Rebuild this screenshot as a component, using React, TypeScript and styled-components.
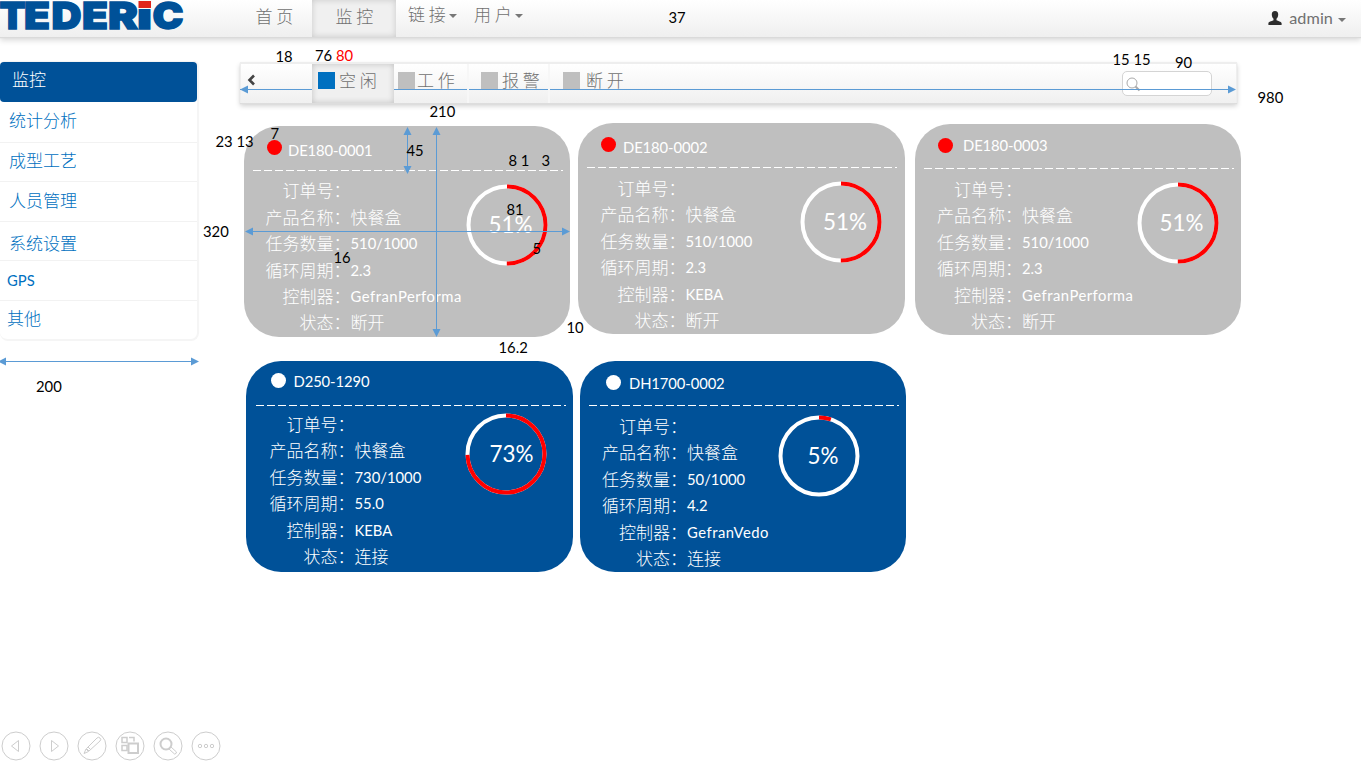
import React from 'react';
import styled, { createGlobalStyle, css } from 'styled-components';

const GlobalStyle = createGlobalStyle`
  *, *::before, *::after { box-sizing: border-box; }
  html, body { margin: 0; padding: 0; background: #fff; overflow: hidden; }
  body { font-family: Lato, 'Noto Sans CJK SC', sans-serif; }
`;

const cjk = css`
  font-family: 'Noto Sans CJK SC', sans-serif;
  font-weight: 300;
  font-size: 17px;
  line-height: 20px;
  white-space: pre;
`;
const latin = css`
  font-family: Lato, 'Noto Sans CJK SC', sans-serif;
  font-size: 14.8px;
  line-height: 20px;
  white-space: pre;
`;

const Page = styled.div`
  position: relative;
  width: 1361px;
  height: 763px;
  overflow: hidden;
  display: flex;
  flex-direction: column;
`;

const Header = styled.header`
  display: flex;
  flex: none;
  height: 37px;
  background: linear-gradient(#fff, #efefef);
  box-shadow: 0 1px 1px #dadada, 0 3px 6px rgba(0, 0, 0, 0.17);
`;
const Logo = styled.svg`
  flex: none;
  display: block;
  width: 236px;
  height: 37px;
`;
const NavItem = styled.a<{ $w: number; $pad: number; $top: number; $active?: boolean }>`
  ${cjk}
  display: flex;
  align-items: flex-start;
  flex: none;
  width: ${p => p.$w}px;
  padding: ${p => p.$top}px 0 0 ${p => p.$pad}px;
  color: #707070;
  ${p => p.$active && css`
    background: #f0f0f0;
    box-shadow: inset 0 0 6px rgba(0, 0, 0, 0.17);
  `}
`;
const Caret = styled.i<{ $top?: number; $left?: number }>`
  flex: none;
  margin: ${p => p.$top ?? 10}px 0 0 ${p => p.$left ?? 3}px;
  border: 4px solid transparent;
  border-top-color: #777;
  border-bottom: 0;
`;
const Account = styled.div`
  ${latin}
  display: flex;
  margin-left: auto;
  padding: 8px 15px 0 0;
  font-size: 16.2px;
  letter-spacing: 0.1px;
  color: #707070;
  svg { margin: 3px 7px 0 0; }
`;

const Body = styled.div`
  display: flex;
  padding-top: 25px;
`;
const Sidebar = styled.nav`
  flex: none;
  width: 199px;
  height: 279px;
  margin-right: 41px;
  border: solid #f5f5f5;
  border-width: 0 2px 2px 0;
  border-radius: 5px 5px 8px 8px;
  box-shadow: 0 -1px 1px #f3f3f3;
`;
const SideItem = styled.a<{ $h: number; $x: number; $y: number; $active?: boolean; $latin?: boolean }>`
  ${p => (p.$latin ? latin : cjk)}
  display: block;
  height: ${p => p.$h}px;
  padding: ${p => p.$y}px 0 0 ${p => p.$x}px;
  color: #0070c0;
  border-bottom: 1px solid #f2f2f2;
  &:last-child { border-bottom: 0; }
  ${p => p.$active && css`
    color: #fff;
    background: #005198;
    border-radius: 4px;
    border: 0;
  `}
`;

const Content = styled.main`
  flex: none;
  width: 1121px;
`;
const Toolbar = styled.div`
  display: flex;
  width: 997px;
  height: 41px;
  margin-bottom: 20px;
  border: 1px solid #eee;
  border-top-width: 2px;
  border-bottom: 0;
  background: linear-gradient(#fff, #f0f0f0);
  box-shadow: 0 1px 1px #ddd, 0 3px 5px rgba(0, 0, 0, 0.18);
`;
const Back = styled.button`
  display: flex;
  align-items: flex-start;
  width: 71px;
  padding: 10px 0 0 5px;
  border: 0;
  background: none;
`;
const Tab = styled.a<{ $w: number; $pad: number; $gap: number; $active?: boolean }>`
  ${cjk}
  display: flex;
  gap: ${p => p.$gap}px;
  width: ${p => p.$w}px;
  padding: 6px 0 0 ${p => p.$pad}px;
  color: #707070;
  border-right: 2px solid #f7f7f7;
  ${p => p.$active && css`
    background: #f0f0f0;
    border: 0;
    box-shadow: inset 0 0 6px rgba(0, 0, 0, 0.2);
  `}
  &:nth-child(5) { border: 0; }
`;
const Swatch = styled.i<{ $c: string }>`
  flex: none;
  width: 17px;
  height: 17px;
  margin-top: 2px;
  background: ${p => p.$c};
`;
const Search = styled.div`
  width: 90px;
  height: 25px;
  margin: 7px 24px 0 auto;
  padding: 4px 0 0 3px;
  border: 1px solid #d4d4d4;
  border-radius: 5px;
  background: #fff;
`;

const CardRow = styled.section<{ $left: number }>`
  display: flex;
  align-items: flex-start;
  height: 238px;
  padding-left: ${p => p.$left}px;
`;
const CardBox = styled.article<{ $on: boolean; $w: number; $top: number; $gap: number }>`
  flex: none;
  width: ${p => p.$w}px;
  height: 211px;
  margin: ${p => p.$top}px ${p => p.$gap}px 0 0;
  border-radius: 35px;
  color: #fff;
  background: ${p => (p.$on ? '#005198' : '#bfbfbf')};
`;
const CardHead = styled.header`
  display: flex;
  height: 44px;
`;
const Dot = styled.i<{ $c: string; $x: number; $y: number }>`
  flex: none;
  width: 15px;
  height: 15px;
  margin: ${p => p.$y - 7.5}px 0 0 ${p => p.$x - 7.5}px;
  border-radius: 50%;
  background: ${p => p.$c};
`;
const CardTitle = styled.h3<{ $x: number; $y: number }>`
  ${latin}
  font-weight: 400;
  letter-spacing: -0.1px;
  margin: ${p => p.$y - 11}px 0 0 ${p => p.$x}px;
`;
const Divider = styled.div<{ $x: number }>`
  width: 310px;
  height: 1px;
  margin-left: ${p => p.$x}px;
  background: repeating-linear-gradient(90deg, #fff 0 8px, transparent 8px 11px);
`;
const CardBody = styled.div`
  display: flex;
  align-items: flex-start;
`;
const Fields = styled.dl<{ $w: number; $label: number; $top: number }>`
  display: grid;
  flex: none;
  grid-template-columns: ${p => p.$label}px 1fr;
  grid-auto-rows: 26.4px;
  align-items: center;
  width: ${p => p.$w}px;
  margin: ${p => p.$top}px 0 0;
`;
const Label = styled.dt`
  ${cjk}
  text-align: right;
`;
const Value = styled.dd<{ $latin: boolean; $wide: boolean }>`
  ${p => (p.$latin ? latin : cjk)}
  margin: 0;
  ${p => p.$wide && css`letter-spacing: 0.5px;`}
`;
const Ring = styled.svg<{ $top: number }>`
  display: block;
  flex: none;
  width: 82px;
  height: 82px;
  margin-top: ${p => p.$top}px;
  overflow: visible;
  font: 23px Lato, sans-serif;
`;

const Controls = styled.footer`
  display: flex;
  gap: 8px;
  margin: auto 0 2px 1px;
  svg { display: block; }
`;

const Note = styled.span<{ $x: number; $y: number; $c?: string }>`
  ${latin}
  position: absolute;
  left: ${p => p.$x - 0.5}px;
  top: ${p => Math.floor(p.$y) - 11}px;
  color: ${p => p.$c ?? '#000'};
`;
const Arrows = styled.svg`
  position: absolute;
  left: 0;
  top: 0;
  pointer-events: none;
`;

type Machine = {
  name: string; on: boolean; w: number; top: number; gap: number;
  dot: [number, number]; title: [number, number]; line: number;
  label: number; first: number; ring: [number, number]; pct: number; textX: number; textY: number;
  values: string[];
};

const labels = ['订单号', '产品名称', '任务数量', '循环周期', '控制器', '状态'];

const rowOne: Machine[] = [
  { name: 'DE180-0001', on: false, w: 326, top: 3, gap: 8, dot: [30, 21.5], title: [44, 24.5], line: 9, label: 106.5, first: 65.5, ring: [263.5, 99.5], pct: 50, textX: 3.5, textY: 0, values: ['', '快餐盒', '510/1000', '2.3', 'GefranPerforma', '断开'] },
  { name: 'DE180-0002', on: false, w: 327, top: 0, gap: 10, dot: [30.5, 21.5], title: [45, 24.5], line: 9, label: 107.5, first: 66, ring: [263.5, 99.5], pct: 50, textX: 4, textY: 0, values: ['', '快餐盒', '510/1000', '2.3', 'KEBA', '断开'] },
  { name: 'DE180-0003', on: false, w: 326, top: 1, gap: 0, dot: [30.5, 21.5], title: [48, 21.5], line: 9, label: 107, first: 66, ring: [263.5, 99.5], pct: 50, textX: 3.5, textY: 0, values: ['', '快餐盒', '510/1000', '2.3', 'GefranPerforma', '断开'] },
];
const rowTwo: Machine[] = [
  { name: 'D250-1290', on: true, w: 327, top: 0, gap: 7, dot: [32.5, 19.5], title: [47.5, 20.5], line: 10, label: 108.5, first: 64, ring: [260.5, 93.5], pct: 74.5, textX: 5.5, textY: 0.5, values: ['', '快餐盒', '730/1000', '55.0', 'KEBA', '连接'] },
  { name: 'DH1700-0002', on: true, w: 326, top: 0, gap: 0, dot: [33.5, 21.5], title: [49, 22.5], line: 9, label: 107, first: 66, ring: [239.5, 95.5], pct: 5, textX: 4, textY: 0.5, values: ['', '快餐盒', '50/1000', '4.2', 'GefranVedo', '连接'] },
];
const percentText: Record<string, string> = { 'D250-1290': '73%', 'DH1700-0002': '5%' };

function Card({ m }: { m: Machine }) {
  const r = 38.5;
  const length = 2 * Math.PI * r;
  const text = percentText[m.name] ?? '51%';
  return (
    <CardBox $on={m.on} $w={m.w} $top={m.top} $gap={m.gap}>
      <CardHead>
        <Dot $c={m.on ? '#fff' : '#f00'} $x={m.dot[0]} $y={m.dot[1]} />
        <CardTitle $x={m.title[0] - m.dot[0] - 7.5} $y={m.title[1]}>{m.name}</CardTitle>
      </CardHead>
      <Divider $x={m.line} />
      <CardBody>
        <Fields $w={m.ring[0] - 41.5} $label={m.label} $top={m.first - 59.2}>
          {labels.map((label, i) => (
            <React.Fragment key={label}>
              <Label>{label}：</Label>
              <Value $latin={/^[\x00-\x7f]*$/.test(m.values[i])} $wide={m.values[i].startsWith('Gefran')}>{m.values[i]}</Value>
            </React.Fragment>
          ))}
        </Fields>
        <Ring $top={m.ring[1] - 86.5} viewBox="0 0 82 82">
          <circle cx="41" cy="41" r={r} fill="none" stroke="#fff" strokeWidth="4" />
          <circle cx="41" cy="41" r={r} fill="none" stroke="#f00" strokeWidth="4"
            strokeDasharray={`${(length * m.pct) / 100} ${length}`} transform="rotate(-90 41 41)" />
          <text x={41 + m.textX} y={48.5 + m.textY} textAnchor="middle" fill="#fff"
            textLength={text.length === 3 ? 44 : 31} lengthAdjust="spacingAndGlyphs">{text}</text>
        </Ring>
      </CardBody>
    </CardBox>
  );
}

const notes: [string, number, number, string?][] = [
  ['37', 669, 18], ['18', 276, 57], ['76', 315.5, 56], ['80', 336.5, 56, '#f00'],
  ['15 15', 1113, 60], ['90', 1175.5, 63], ['980', 1258, 98], ['210', 430, 112],
  ['23 13', 216, 142], ['7', 271, 134], ['45', 407, 151], ['8 1', 509, 161], ['3', 542, 161],
  ['81', 507, 210], ['5', 533, 249], ['16', 334, 258], ['320', 203.5, 232],
  ['10', 567, 328], ['16.2', 499, 348], ['200', 36.5, 387],
];

const controlIcons = [
  <path d="M17.5 9.5v11l-7-5.5z" />,
  <path d="M12.5 9.5v11l7-5.5z" />,
  <path d="M7 22.500l2-4.500 2.500 2.500zM9.500 17.500L20 7q1.500-1.500 3 0t0 3L12 20z M11 16l2.500 2.500" />,
  <g><path d="M7 6.500h5v5H7zM14 6.500h5v4M7 14.500h5v5H7z" strokeWidth="1.500" /><path d="M13.500 12.500h9.500v9.500h-9.500z" strokeWidth="2" /></g>,
  <g><circle cx="13" cy="13" r="5.5" strokeWidth="2" /><path d="M16 18l2-2 5.500 5q0 2-2 2z" /></g>,
  <g><circle cx="9" cy="15" r="1.7" /><circle cx="15" cy="15" r="1.7" /><circle cx="21" cy="15" r="1.7" /></g>,
];

export default function App() {
  return (
    <Page>
      <GlobalStyle />
      <Header>
        <Logo viewBox="0 0 236 37" fontFamily="Inter, sans-serif" fontWeight="900" fontSize="37.5" fill="#005198">
          <g stroke="#005198" strokeWidth="1.4">
            <text y="29.3" x="-0.5" textLength="26" lengthAdjust="spacingAndGlyphs">T</text>
            <text y="29.3" x="24" textLength="26" lengthAdjust="spacingAndGlyphs">E</text>
            <text y="29.3" x="51.5" textLength="30" lengthAdjust="spacingAndGlyphs">D</text>
            <text y="29.3" x="82" textLength="26" lengthAdjust="spacingAndGlyphs">E</text>
            <text y="29.3" x="108" textLength="30" lengthAdjust="spacingAndGlyphs">R</text>
            <text y="29.3" x="137" textLength="15" lengthAdjust="spacingAndGlyphs">i</text>
            <text y="29.3" x="152.5" textLength="31" lengthAdjust="spacingAndGlyphs">C</text>
          </g>
          <path d="M137.500 0h14.500v9h-14.500z" fill="#fafafa" />
          <path d="M138.500 1h12.500v7h-12.500z" fill="#e1251b" />
        </Logo>
        <NavItem $w={76} $pad={19.5} $top={6}>首 页</NavItem>
        <NavItem $w={84} $pad={23.5} $top={6} $active>监 控</NavItem>
        <NavItem $w={77} $pad={12} $top={4}>链 接<Caret /></NavItem>
        <NavItem $w={70} $pad={1} $top={4}>用 户<Caret /></NavItem>
        <Account>
          <svg width="14" height="14" viewBox="0 0 14 14" fill="#2d2d2d">
            <path d="M7 0c2.4 0 3.3 1.6 3.2 3.7-.1 1.800-.8 3.200-1.700 4v1.500c1.600.8 4.700 1.300 5.100 2.800V14H.4v-2c.4-1.500 3.500-2 5.100-2.800V7.700c-.9-.8-1.600-2.200-1.700-4C3.700 1.600 4.600 0 7 0z" />
          </svg>
          admin<Caret $left={5} />
        </Account>
      </Header>
      <Body>
        <Sidebar>
          <SideItem $h={40} $x={12} $y={7} $active>监控</SideItem>
          <SideItem $h={41} $x={9} $y={8}>统计分析</SideItem>
          <SideItem $h={39} $x={9} $y={7}>成型工艺</SideItem>
          <SideItem $h={40} $x={9} $y={8}>人员管理</SideItem>
          <SideItem $h={39} $x={9} $y={11}>系统设置</SideItem>
          <SideItem $h={40} $x={7} $y={9} $latin>GPS</SideItem>
          <SideItem $h={38} $x={7} $y={7}>其他</SideItem>
        </Sidebar>
        <Content>
          <Toolbar>
            <Back>
              <svg width="10" height="12" viewBox="0 0 10 12" fill="none" stroke="#444" strokeWidth="2.6"><path d="M8 1.500L3.500 6L8 10.500" /></svg>
            </Back>
            <Tab $w={82} $pad={6} $gap={4} $active><Swatch $c="#0070c0" />空 闲</Tab>
            <Tab $w={75} $pad={4} $gap={2}><Swatch $c="#bfbfbf" />工 作</Tab>
            <Tab $w={81} $pad={12} $gap={4}><Swatch $c="#bfbfbf" />报 警</Tab>
            <Tab $w={90} $pad={13} $gap={6}><Swatch $c="#bfbfbf" />断 开</Tab>
            <Search>
              <svg width="15" height="15" viewBox="0 0 15 15" fill="none" stroke="#aaa"><circle cx="6" cy="6" r="5" /><path d="M9.500 9.500l4 4" strokeWidth="2" /></svg>
            </Search>
          </Toolbar>
          <CardRow $left={4}>{rowOne.map(m => <Card key={m.name} m={m} />)}</CardRow>
          <CardRow $left={6}>{rowTwo.map(m => <Card key={m.name} m={m} />)}</CardRow>
        </Content>
      </Body>
      <Controls>
        {controlIcons.map((icon, i) => (
          <svg key={i} width="30" height="30" viewBox="0 0 30 30" fill="none" stroke="#cdcdcd">
            <circle cx="15" cy="15" r="14" />{icon}
          </svg>
        ))}
      </Controls>
      <Arrows width="1361" height="763" fill="#5b9bd5">
        <path d="M240 89.500h72M394 89.500h73M469 89.500h79M550 89.500h683M3 361.500h192M248 231.500h318M407.500 130v40M436.500 130v203" stroke="#5b9bd5" fill="none" />
        <path d="M240 89.500l8-4v8zM1236 89.500l-8-4v8zM-2 361.500l8-4v8zM199 361.500l-8-4v8zM245 231.500l8-4v8zM570 231.500l-8-4v8zM407.500 127l-4 8h8zM407.500 174l-4-8h8zM436.500 127l-4 8h8zM436.500 337l-4-8h8z" />
      </Arrows>
      {notes.map(([t, x, y, c]) => <Note key={`${t}-${x}`} $x={x} $y={y} $c={c}>{t}</Note>)}
    </Page>
  );
}
